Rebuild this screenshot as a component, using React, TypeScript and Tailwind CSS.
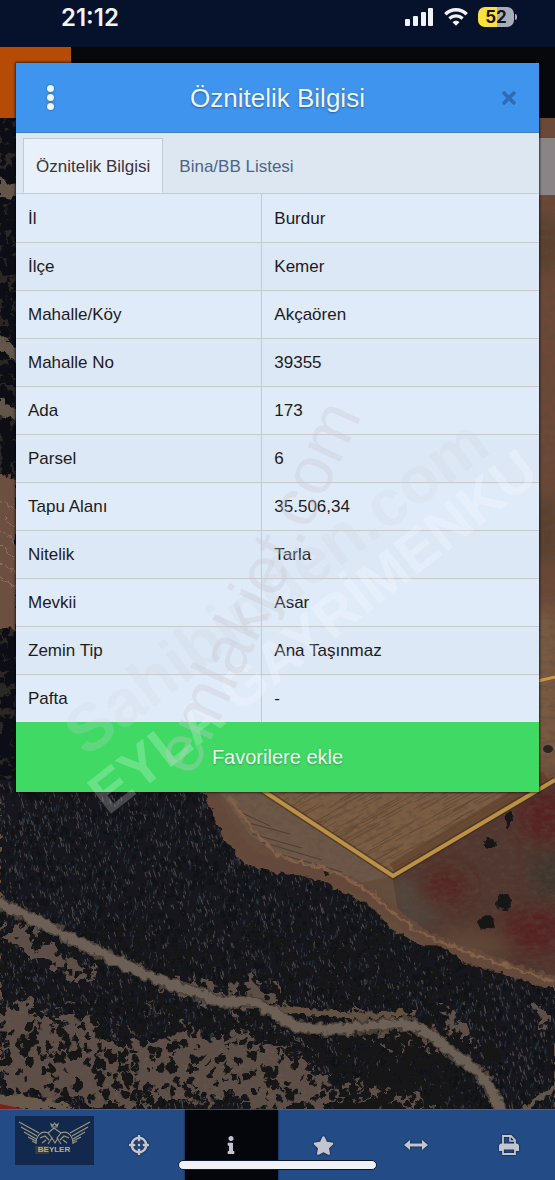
import { useState } from 'react';
import { FaCrosshairs, FaInfo, FaStar, FaTimes } from 'react-icons/fa';

const rows = [
  { label: 'İl', value: 'Burdur' },
  { label: 'İlçe', value: 'Kemer' },
  { label: 'Mahalle/Köy', value: 'Akçaören' },
  { label: 'Mahalle No', value: '39355' },
  { label: 'Ada', value: '173' },
  { label: 'Parsel', value: '6' },
  { label: 'Tapu Alanı', value: '35.506,34' },
  { label: 'Nitelik', value: 'Tarla' },
  { label: 'Mevkii', value: 'Asar' },
  { label: 'Zemin Tip', value: 'Ana Taşınmaz' },
  { label: 'Pafta', value: '-' },
];

// small seeded generator so the trees stay in the same place on every render
function makeRandom(seed: number) {
  let s = seed;
  return () => {
    s = (s * 1664525 + 1013904223) % 4294967296;
    return s / 4294967296;
  };
}

function blobs(seed: number, count: number, x0: number, y0: number, w: number, h: number, min: number, max: number) {
  const rnd = makeRandom(seed);
  let d = '';
  for (let i = 0; i < count; i++) {
    const x = x0 + rnd() * w;
    const y = y0 + rnd() * h;
    const r = min + rnd() * (max - min);
    const ry = r * 1.2;
    d += `M${(x - r).toFixed(1)} ${y.toFixed(1)}a${r.toFixed(1)} ${ry.toFixed(1)} 0 1 0 ${(r * 2).toFixed(1)} 0a${r.toFixed(1)} ${ry.toFixed(1)} 0 1 0 ${(-r * 2).toFixed(1)} 0z`;
  }
  return d;
}

function ticks(seed: number, count: number, x0: number, y0: number, w: number, h: number, dx: number, dy: number) {
  const rnd = makeRandom(seed);
  let d = '';
  for (let i = 0; i < count; i++) {
    const k = 0.4 + rnd();
    d += `M${(x0 + rnd() * w).toFixed(1)} ${(y0 + rnd() * h).toFixed(1)}l${(dx * k).toFixed(1)} ${(dy * k).toFixed(1)}`;
  }
  return d;
}

const FOREST =
  'M0 780H180L205 795L215 818L226 842L245 864L277 873L320 880L350 896L375 910L390 928L420 945L440 946L470 966L510 976L545 988L555 988V1180H0Z';
const ROAD =
  'M-5 902C30 916 55 930 85 945S150 978 180 987S215 1005 238 1001S275 1017 295 1025S360 1028 392 1024S440 1045 465 1062S492 1090 500 1112';

const lightGaps = ticks(11, 4200, 0, 780, 555, 330, 1, 4);
const blueGaps = ticks(12, 2600, 0, 780, 555, 330, -1, 5);
const denseTrees = blobs(3, 2600, 0, 785, 555, 325, 1, 3);
const lowTrees = blobs(21, 1150, 0, 925, 500, 190, 1, 4);
const lowTreesRight = blobs(22, 420, 340, 1030, 120, 80, 1, 4);
const sideTrees = blobs(31, 420, 0, 118, 17, 680, 1.5, 5);
const furrows = ticks(41, 260, 255, 790, 290, 95, 24, -13);
const redSpecks = ticks(42, 420, 385, 800, 170, 170, 3, 2);

function SatelliteMap() {
  return (
    <svg
      className="absolute inset-0 h-full w-full"
      viewBox="0 0 555 1180"
      preserveAspectRatio="xMidYMid slice"
      aria-hidden="true"
    >
      <defs>
        <clipPath id="forest">
          <path d={FOREST} />
        </clipPath>
        <clipPath id="field">
          <path d="M255 785L393 876L555 782V770Z" />
        </clipPath>
        <clipPath id="meadow">
          <path d="M393 880L555 785V985L470 960L400 920Z" />
        </clipPath>
        <filter id="soft" x="-30%" y="-30%" width="160%" height="160%">
          <feGaussianBlur stdDeviation="9" />
        </filter>
        <filter id="soil" x="0" y="0" width="100%" height="100%">
          <feTurbulence type="fractalNoise" baseFrequency="0.12 0.2" numOctaves="4" seed="5" />
          <feColorMatrix values="0 0 0 0 0.1  0 0 0 0 0.07  0 0 0 0 0.05  0 0 0 2.4 -1" />
        </filter>
        {/* ragged edges for clearings, tree line and roads */}
        <filter id="ragged" x="-10%" y="-10%" width="120%" height="120%">
          <feTurbulence type="fractalNoise" baseFrequency="0.07" numOctaves="3" seed="9" />
          <feDisplacementMap in="SourceGraphic" scale="38" xChannelSelector="R" yChannelSelector="G" />
        </filter>
        <filter id="rough" x="-5%" y="-5%" width="110%" height="110%">
          <feTurbulence type="fractalNoise" baseFrequency="0.15" numOctaves="2" seed="4" />
          <feDisplacementMap in="SourceGraphic" scale="9" xChannelSelector="R" yChannelSelector="G" />
        </filter>
      </defs>

      <rect width="555" height="1180" fill="#664e3d" />

      {/* strip on the left of the dialog */}
      <rect y="110" width="17" height="690" fill="#2b2725" />
      <g filter="url(#rough)">
        <path d={sideTrees} fill="#0f1012" />
        <path d="M0 178l17 8v14l-17-4zM0 333l17 16v12l-17-12zM0 398l17 12v10l-17 -4z" fill="#625549" />
        <path d="M-8 470l25 10v150l-25-5z" fill="#6c503f" />
        <path d="M0 500l17 12M0 515l17 14M0 530l17 14M0 546l17 14M0 562l17 12M0 578l17 10" stroke="#8f755f" />
      </g>

      {/* strip on the right */}
      <rect x="538" y="110" width="17" height="700" fill="#6b4837" />
      <g filter="url(#soft)">
        <path d="M530 220h30v50h-30zM530 500h30v60h-30z" fill="#59402f" />
        <path d="M530 610h30v160h-30z" fill="#7a5c43" />
      </g>
      <rect x="538" y="138" width="17" height="57" fill="#8b8486" />
      <rect x="538" y="196" width="17" height="600" filter="url(#soil)" opacity="0.5" />
      <path d="M538 681l17-4" stroke="#c89a45" strokeWidth="3" />
      <ellipse cx="548" cy="749" rx="5" ry="4" fill="#2a2420" />

      {/* fields */}
      <path d="M393 878L555 782V990L470 965L400 925Z" fill="#51372f" />
      <g clipPath="url(#meadow)">
        <g filter="url(#soft)">
          <ellipse cx="445" cy="886" rx="24" ry="18" fill="#552523" />
          <ellipse cx="545" cy="815" rx="26" ry="28" fill="#572223" />
          <ellipse cx="535" cy="930" rx="34" ry="22" fill="#552422" />
          <ellipse cx="550" cy="875" rx="20" ry="24" fill="#3d362f" />
          <ellipse cx="415" cy="915" rx="22" ry="16" fill="#4f453c" />
          <ellipse cx="400" cy="890" rx="20" ry="12" fill="#54473c" />
          <ellipse cx="470" cy="945" rx="40" ry="12" fill="#644938" />
        </g>
        <path d={redSpecks} stroke="#6d473a" strokeWidth="0.7" opacity="0.4" />
      </g>
      <path d="M215 785H262L393 876L350 885L290 860L250 835Z" fill="#6d5747" />
      <path d="M258 785L393 874L550 785Z" fill="#7b5d43" />
      <g clipPath="url(#field)">
        <path d={furrows} stroke="#634933" strokeWidth="0.8" />
        <path d="M395 872L548 780" stroke="#5e3c28" strokeWidth="20" opacity="0.6" />
      </g>
      <path d="M240 812l30 14M245 822l45 12M252 834l50 14M262 842l60 18M272 852l70 20" stroke="#4f3a30" fill="none" />
      <g filter="url(#rough)">
        <path
          d="M203 782C223 818 236 852 262 862S325 870 358 888S412 937 452 950S522 974 565 987"
          fill="none"
          stroke="#66493a"
          strokeWidth="14"
        />
        <path d="M230 797C255 835 270 858 305 864S370 890 392 912S450 948 555 982" fill="none" stroke="#856247" strokeWidth="3" />
      </g>
      <rect x="195" y="780" width="360" height="210" filter="url(#soil)" opacity="0.4" />
      <path d="M262 790L393 876L555 780" fill="none" stroke="#33261c" strokeWidth="7" opacity="0.5" />
      <path d="M262 790L393 876L555 780" fill="none" stroke="#bd9143" strokeWidth="4" />

      {/* forest */}
      <path d={FOREST} fill="#17181b" filter="url(#rough)" />
      <g clipPath="url(#forest)">
        <path d={lightGaps} stroke="#4c4846" strokeWidth="1" />
        <path d={blueGaps} stroke="#26313b" strokeWidth="1" />
        <path d={denseTrees} fill="#0f1114" opacity="0.7" />

        {/* clearings */}
        <g fill="#5d5046" filter="url(#ragged)">
          <path d="M0 1010l30-12 25 22 25-8 25 30 45 0 35-14 45 18 20 10-30 20-60 6-50-4-45 10-60-8z" />
          <path d="M0 1072l50-6 70 10 55-16 60-24 60 20 30 26-60 10-80 6-60 8-125-14z" />
          <path d="M350 1000l18 14 35 6 10-20 18 30 40 20-50 4-55-10z" />
          <path d="M160 980l60 4 65 2v22l-70-4z" />
          <path d="M0 925l30 6 25 20 40 22-25 4-30-18-30-10z" />
          <path d="M440 1010l20 10 14 24-20-6zM535 1000l15 20-10 12zM250 1090l60-10 90 8 30 10v12H240z" />
        </g>
        <g filter="url(#rough)">
          <path d={ticks(51, 420, 0, 1000, 320, 105, 3, 2)} stroke="#6d5c4c" strokeWidth="1.2" opacity="0.7" />
          <path d={lowTrees} fill="#131417" />
          <path d={lowTreesRight} fill="#131417" />
        </g>
      </g>

      {/* dirt roads */}
      <g filter="url(#rough)">
        <path d="M240 1006C300 1008 355 1022 405 1012" fill="none" stroke="#62513f" strokeWidth="6" />
        <path d={ROAD} fill="none" stroke="#4a4039" strokeWidth="13" />
        <path d={ROAD} fill="none" stroke="#6c6056" strokeWidth="9" />
        <path d="M515 1116L565 1080" stroke="#60554c" strokeWidth="5" />
        <path d="M200 1068C212 1050 225 1040 250 1034M210 1112C208 1085 214 1070 225 1060" fill="none" stroke="#5c5047" strokeWidth="4" />
        <path d="M-5 1097C30 1094 55 1100 75 1108H-5Z" fill="#6a5a4c" />
      </g>
      <path d="M0 1104L24 1109H0Z" fill="#7b1f1f" />

      {/* lone trees */}
      <g fill="#191614" filter="url(#rough)">
        <ellipse cx="509" cy="820" rx="4" ry="7" />
        <ellipse cx="490" cy="844" rx="7" ry="5" />
        <ellipse cx="504" cy="902" rx="7" ry="8" />
        <ellipse cx="487" cy="923" rx="9" ry="7" />
        <circle cx="326" cy="874" r="2" />
      </g>
    </svg>
  );
}

function Watermarks() {
  return (
    <svg
      className="pointer-events-none absolute inset-0 z-20 h-full w-full font-['Liberation_Sans',sans-serif]"
      viewBox="0 0 555 1180"
      preserveAspectRatio="xMidYMin slice"
      aria-hidden="true"
    >
      <text transform="translate(86 758) rotate(-37)" fontSize="66" fontWeight="700" fill="#cfd3dc" opacity="0.22">
        Sahibinden.com
      </text>
      <text transform="translate(108 816) rotate(-38)" fontSize="57" fontWeight="700" fill="#ffffff" opacity="0.22">
        EYLA GAYRİMENKU
      </text>
      <text transform="translate(193 778) rotate(-65)" fontSize="68" fill="#c9c8ce" opacity="0.34">
        emlakjet.com
      </text>
    </svg>
  );
}

function StatusBar() {
  return (
    <div className="relative z-10 flex h-[47px] items-start justify-between bg-[#06112b] pt-1 pr-[38px] pl-[61px] text-[#f1f3f6]">
      <span className="font-['Inter',sans-serif] text-2xl leading-[27px] font-semibold">21:12</span>
      <div className="flex h-[26px] items-center gap-2.5">
        <svg width="29" height="18" viewBox="0 0 29 18" fill="currentColor" aria-hidden="true">
          <rect x="0" y="11" width="5" height="7" rx="1" />
          <rect x="8" y="8" width="5" height="10" rx="1" />
          <rect x="16" y="4" width="5" height="14" rx="1" />
          <rect x="23" y="0" width="5" height="18" rx="1" />
        </svg>
        <svg width="24" height="18" viewBox="0 0 24 18" fill="none" stroke="currentColor" strokeWidth="3.4" aria-hidden="true">
          <path d="M1.3 6.2C7.5 .3 16.5 .3 22.7 6.2" />
          <path d="M5.4 10.5C9.2 7 14.8 7 18.6 10.5" />
          <path d="M12 17.8L8.5 14.2C10.5 12.4 13.5 12.4 15.5 14.2Z" fill="currentColor" stroke="none" />
        </svg>
        <div className="flex items-center gap-px">
          <span className="h-5 w-9 rounded-[7px] bg-linear-to-r from-[#fbe03e] from-52% to-[#a9adba] to-52% text-center font-['Inter',sans-serif] text-[17px] leading-5 font-bold text-[#17140f]">
            52
          </span>
          <span className="h-1.5 w-0.5 rounded-r bg-[#a9adba]" />
        </div>
      </div>
    </div>
  );
}

function EagleLogo() {
  return (
    <svg width="79" height="49" viewBox="0 0 79 49" fill="none" stroke="#9c9782" strokeWidth="1.1" aria-hidden="true">
      <path d="M4 6L24 17M6 11L22 20M9 16L21 23M13 21L21 25M17 25L21 27" />
      <path d="M75 6L55 17M73 11L57 20M70 16L58 23M66 21L58 25M62 25L58 27" />
      <path d="M21 28C21 20 26 14 33 17L37 22L33 28M58 28C58 20 53 14 46 17L42 22L46 28" />
      <path d="M33 17L39 12L46 17M37 22L40 27L43 22M25 22L30 20L34 24M54 22L49 20L45 24M27 27L31 24M52 27L48 24" />
      <path d="M36 8L37 11H42L43 8L41 9.5L39.5 7L38 9.5Z" />
      <path d="M20 30h14v8h-14z" fill="#3b3a33" stroke="none" />
      <text
        x="39"
        y="36"
        textAnchor="middle"
        fontSize="8"
        fontWeight="700"
        fill="#b5af98"
        stroke="none"
        fontFamily="Liberation Sans, sans-serif"
      >
        BEYLER
      </text>
    </svg>
  );
}

function ArrowsIcon() {
  return (
    <svg width="24" height="12" viewBox="0 0 24 12" fill="currentColor" aria-hidden="true">
      <path d="M0 6L6 1V4.5H18V1L24 6L18 11V7.5H6V11Z" />
    </svg>
  );
}

function PrintIcon() {
  return (
    <svg width="22" height="22" viewBox="0 0 22 22" fill="none" stroke="currentColor" strokeWidth="1.8" aria-hidden="true">
      <path d="M5 10V2H13L17 6V10" />
      <path d="M12 2V7H17" strokeWidth="1.5" />
      <path d="M1 17V12C1 10.500 2 9.500 3.500 9.500H18.500C20 9.500 21 10.500 21 12V17H17V14H5V17Z" fill="currentColor" stroke="none" />
      <path d="M5 14.500H17V20H5Z" />
    </svg>
  );
}

const tools = [
  { id: 'locate', label: 'Konum', icon: <FaCrosshairs size={20} /> },
  { id: 'info', label: 'Bilgi', icon: <FaInfo size={18} /> },
  { id: 'favorites', label: 'Favoriler', icon: <FaStar size={21} /> },
  { id: 'measure', label: 'Ölçüm', icon: <ArrowsIcon /> },
  { id: 'print', label: 'Yazdır', icon: <PrintIcon /> },
];

export default function App() {
  const [tab, setTab] = useState('info');
  const [tool, setTool] = useState('info');

  const tabBase = 'h-[55px] border pt-0.5 text-[17px] leading-6';
  const tabActive = 'border-[#c3c9d0] border-b-transparent bg-[#e8f0fb] px-3 text-[#3a3438]';
  const tabIdle = 'border-transparent px-[15px] text-[#4d6488]';

  return (
    <div className="relative flex min-h-screen flex-col overflow-hidden bg-[#17181b] font-['Liberation_Sans',sans-serif]">
      <SatelliteMap />
      <StatusBar />

      <main className="relative flex-1 px-4 pt-4 pb-10">
        {/* dimmed app header behind the dialog */}
        <div className="absolute inset-x-0 top-0 flex h-[71px] bg-[#07080c]">
          <div className="w-[71px] bg-[#b54b04]" />
        </div>

        <section
          role="dialog"
          aria-labelledby="dialog-title"
          className="relative z-10 bg-[#dfeaf8] shadow-[0_0_2px_1px_rgba(0,0,0,0.6)]"
        >
          <header className="flex h-[70px] items-center justify-between border-b border-[#3b7cc4] bg-[#3f94ee] px-5">
            <button type="button" aria-label="Menü" className="flex w-7 flex-col items-center gap-0.5 text-white">
              <span className="size-[7px] rounded-full bg-[#eef6fd] shadow-[0_0_2px_#1c4f8c]" />
              <span className="size-[7px] rounded-full bg-[#eef6fd] shadow-[0_0_2px_#1c4f8c]" />
              <span className="size-[7px] rounded-full bg-[#eef6fd] shadow-[0_0_2px_#1c4f8c]" />
            </button>
            <h1 id="dialog-title" className="text-[26px] leading-8 text-[#eef5fb] [text-shadow:0_1px_2px_#2a5f9c]">
              Öznitelik Bilgisi
            </h1>
            <button type="button" aria-label="Kapat" className="flex w-7 justify-end text-[#2f6cb5]">
              <FaTimes size={20} />
            </button>
          </header>

          <div role="tablist" className="flex h-[61px] items-end border-b border-[#c5ccd4] bg-[#dce7f2] px-[7px]">
            <button
              type="button"
              role="tab"
              aria-selected={tab === 'info'}
              onClick={() => setTab('info')}
              className={`${tabBase} ${tab === 'info' ? tabActive : tabIdle}`}
            >
              Öznitelik Bilgisi
            </button>
            <button
              type="button"
              role="tab"
              aria-selected={tab === 'list'}
              onClick={() => setTab('list')}
              className={`${tabBase} ${tab === 'list' ? tabActive : tabIdle}`}
            >
              Bina/BB Listesi
            </button>
          </div>

          <table className="w-full table-fixed border-collapse text-left text-[17px] leading-6 text-[#1d1a1c]">
            <tbody>
              {rows.map((row) => (
                <tr key={row.label} className="h-12 border-b border-[#c8c9cd] odd:bg-[#e0ebf9] even:bg-[#dde8f6] last:border-b-0">
                  <th scope="row" className="w-[47%] border-r border-[#c8c9cd] px-3 pt-0.5 font-normal">
                    {row.label}
                  </th>
                  <td className="px-3 pt-0.5">{row.value}</td>
                </tr>
              ))}
            </tbody>
          </table>

          <button
            type="button"
            className="h-[70px] w-full bg-[#3fd964] text-xl text-[#eefbf0] [text-shadow:0_1px_2px_#3c9c50]"
          >
            Favorilere ekle
          </button>
        </section>
      </main>

      <nav className="relative z-10 grid h-[71px] grid-cols-6 border-t border-[#3a659c] bg-[#234c86] text-[#c3c6cf]">
        <div className="flex min-w-0 items-start pt-1.5 pl-[15px]">
          <div className="z-10 shrink-0 bg-[#12294d]">
            <EagleLogo />
          </div>
        </div>
        {tools.map((t) => (
          <button
            key={t.id}
            type="button"
            aria-label={t.label}
            onClick={() => setTool(t.id)}
            className={`flex items-center justify-center drop-shadow-[0_0_1px_#0a1428] ${tool === t.id ? 'bg-[#05060b]' : ''}`}
          >
            {t.icon}
          </button>
        ))}
        {/* home indicator */}
        <div className="absolute inset-x-0 bottom-2.5 flex justify-center">
          <span className="h-2.5 w-[36%] rounded-full border border-[#0c1730] bg-[#f0f1f6]" />
        </div>
      </nav>

      <Watermarks />
    </div>
  );
}
